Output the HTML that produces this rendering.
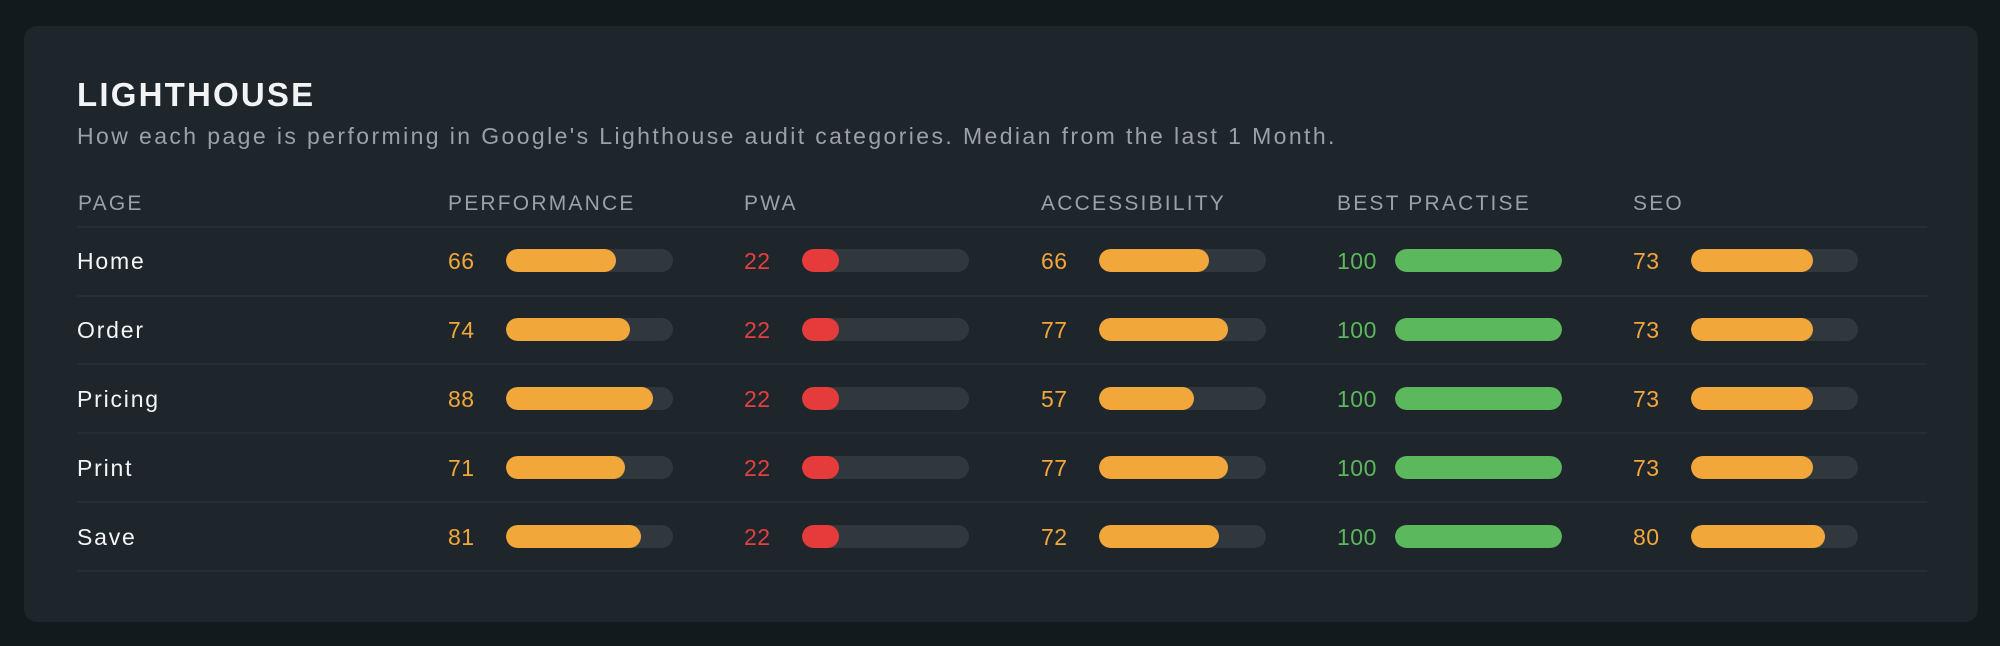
<!DOCTYPE html>
<html><head><meta charset="utf-8"><style>
*{margin:0;padding:0;box-sizing:border-box}
body{width:2000px;height:646px;background:#121a1e;font-family:"Liberation Sans",sans-serif;position:relative;overflow:hidden}
.card{position:absolute;left:24px;top:26px;width:1954px;height:596px;background:#1e252b;border-radius:13px}
.a{position:absolute;white-space:nowrap}
.h1{left:77px;top:76px;font-size:33px;font-weight:bold;color:#f2f3f4;letter-spacing:2.2px}
.sub{left:77px;top:123px;font-size:23px;color:#9ba1a6;letter-spacing:2.4px}
.hd{top:192px;font-size:21px;color:#9ba1a6;letter-spacing:2.2px}
.ln{left:77px;width:1850px;height:2px;background:#262d33}
.nm{font-size:23px;color:#f4f5f6;left:77px;letter-spacing:1.8px}
.n{font-size:23px;letter-spacing:0.5px}
.bar{height:23px;width:167px;border-radius:12px;background:#31383d;overflow:hidden}
.bar i{display:block;height:100%;border-radius:12px}
.o{color:#f2a73b}.o i{background:#f2a73b}
.r{color:#e3403f}.r i{background:#e53b3b}
.g{color:#5cb85c}.g i{background:#5cb85c}
</style></head><body>
<div class="card"></div>
<div class="a h1">LIGHTHOUSE</div>
<div class="a sub">How each page is performing in Google's Lighthouse audit categories. Median from the last 1 Month.</div>
<div class="a hd" style="left:78px">PAGE</div>
<div class="a hd" style="left:448px">PERFORMANCE</div>
<div class="a hd" style="left:744px">PWA</div>
<div class="a hd" style="left:1041px">ACCESSIBILITY</div>
<div class="a hd" style="left:1337px">BEST PRACTISE</div>
<div class="a hd" style="left:1633px">SEO</div>
<div class="a ln" style="top:226px"></div>
<div class="a ln" style="top:295px"></div>
<div class="a ln" style="top:363px"></div>
<div class="a ln" style="top:432px"></div>
<div class="a ln" style="top:501px"></div>
<div class="a ln" style="top:570px"></div>
<div id="rows"></div>
<script>
var rows=[["Home",66,22,66,100,73],["Order",74,22,77,100,73],["Pricing",88,22,57,100,73],["Print",71,22,77,100,73],["Save",81,22,72,100,80]];
var cols=[448,744,1041,1337,1633];
var ys=[260,329,398,467,536];
var h="";
function cls(v){return v>=90?"g":v>=50?"o":"r"}
rows.forEach(function(r,i){
 var y=ys[i];
 h+='<div class="a nm" style="top:'+(y-12)+'px">'+r[0]+'</div>';
 for(var c=0;c<5;c++){var v=r[c+1],k=cls(v);var w=Math.max(v,22)/100*167;
  h+='<div class="a n '+k+'" style="left:'+cols[c]+'px;top:'+(y-12)+'px">'+v+'</div>';
  h+='<div class="a bar '+k+'" style="left:'+(cols[c]+58)+'px;top:'+(y-11)+'px"><i style="width:'+w+'px"></i></div>';}
});
document.getElementById("rows").innerHTML=h;
</script>
</body></html>
